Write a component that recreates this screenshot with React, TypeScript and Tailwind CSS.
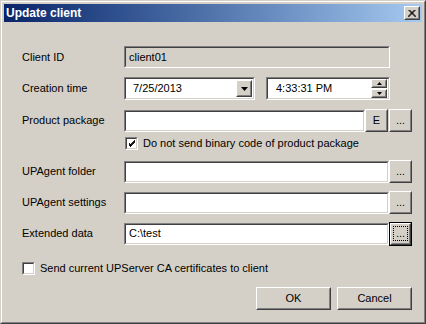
import React from 'react'

// Classic Windows 2000 "Update client" dialog

const font = "font-['Liberation_Sans',Arial,sans-serif]"

function Sunken({ className, disabled, children }: { className: string; disabled?: boolean; children?: React.ReactNode }) {
  return (
    <div className={`${className} border border-t-[#808080] border-l-[#808080] border-b-white border-r-white`}>
      <div
        className={`h-full border border-t-[#404040] border-l-[#404040] border-b-[#d4d0c8] border-r-[#d4d0c8] flex items-center ${disabled ? 'bg-[#d4d0c8]' : 'bg-white'}`}
      >
        {children}
      </div>
    </div>
  )
}

function Raised({ className, children, isDefault }: { className: string; children?: React.ReactNode; isDefault?: boolean }) {
  const body = (
    <div className="h-full border border-t-white border-l-white border-b-[#404040] border-r-[#404040]">
      <div className="h-full border border-t-[#d4d0c8] border-l-[#d4d0c8] border-b-[#808080] border-r-[#808080] bg-[#d4d0c8] flex items-center justify-center">
        {children}
      </div>
    </div>
  )
  if (isDefault) {
    return <div className={`${className} border border-black`}>{body}</div>
  }
  return <div className={className}>{body}</div>
}

function CheckBox({ checked }: { checked?: boolean }) {
  return (
    <Sunken className="w-[13px] h-[13px] shrink-0">
      {checked && (
        <svg width="9" height="9" viewBox="0 0 9 9" className="ml-[1px]">
          <path d="M1 4 L3 6 L8 1 M1 5 L3 7 L8 2 M1 6 L3 8 L8 3" stroke="black" strokeWidth="1" fill="none" shapeRendering="crispEdges" />
        </svg>
      )}
    </Sunken>
  )
}

function Label({ children }: { children: React.ReactNode }) {
  return <div className="w-[102px] shrink-0 text-[11px] text-black">{children}</div>
}

const DownArrow = () => (
  <svg width="7" height="4" viewBox="0 0 7 4">
    <path d="M0 0 H7 L3.5 4 Z" fill="black" />
  </svg>
)

export default function App() {
  return (
    <div className={`w-[426px] h-[324px] ${font} border border-t-[#d4d0c8] border-l-[#d4d0c8] border-b-[#404040] border-r-[#404040]`}>
      <div className="h-full border border-t-white border-l-white border-b-[#808080] border-r-[#808080] bg-[#d4d0c8] p-[2px] flex flex-col">
        {/* Title bar */}
        <div className="h-[18px] shrink-0 bg-linear-to-r from-[#0a246a] to-[#a6caf0] flex items-center justify-between pl-[2px] pr-[2px]">
          <span className="text-white font-bold text-[12px] leading-none">Update client</span>
          <Raised className="w-[16px] h-[14px]">
            <svg width="8" height="7" viewBox="0 0 8 7">
              <path d="M0.5 0 L7.5 7 M1.5 0 L8.5 7 M7.5 0 L0.5 7 M6.5 0 L-0.5 7" stroke="black" strokeWidth="1" />
            </svg>
          </Raised>
        </div>

        {/* Form */}
        <div className="flex flex-col pl-[18px] pr-[10px] text-[11px]">
          <div className="mt-[24px] h-[22px] flex items-center">
            <Label>Client ID</Label>
            <Sunken className="w-[266px] h-[22px]" disabled>
              <span className="pl-[3px] text-black">client01</span>
            </Sunken>
          </div>

          <div className="mt-[9px] h-[23px] flex items-center">
            <Label>Creation time</Label>
            <Sunken className="w-[131px] h-[23px]">
              <span className="pl-[7px] flex-1">7/25/2013</span>
              <Raised className="w-[16px] h-[17px] mr-[1px]">
                <DownArrow />
              </Raised>
            </Sunken>
            <Sunken className="w-[124px] h-[23px] ml-[11px]">
              <span className="pl-[8px] flex-1">4:33:31 PM</span>
              <div className="flex flex-col gap-[1px] mr-[1px]">
                <Raised className="w-[16px] h-[9px]">
                  <svg width="5" height="3" viewBox="0 0 5 3">
                    <path d="M0 3 H5 L2.5 0 Z" fill="black" />
                  </svg>
                </Raised>
                <Raised className="w-[16px] h-[9px]">
                  <svg width="5" height="3" viewBox="0 0 5 3">
                    <path d="M0 0 H5 L2.5 3 Z" fill="black" />
                  </svg>
                </Raised>
              </div>
            </Sunken>
          </div>

          <div className="mt-[9px] h-[23px] flex items-center">
            <Label>Product package</Label>
            <Sunken className="w-[241px] h-[22px]" />
            <Raised className="w-[23px] h-[23px]">E</Raised>
            <Raised className="w-[23px] h-[23px] ml-[1px]">
              <span className="leading-none pb-[1px]">...</span>
            </Raised>
          </div>

          <div className="mt-[5px] h-[13px] flex items-center pl-[103px]">
            <CheckBox checked />
            <span className="ml-[5px]">Do not send binary code of product package</span>
          </div>

          <div className="mt-[10px] h-[23px] flex items-center">
            <Label>UPAgent folder</Label>
            <Sunken className="w-[265px] h-[22px]" />
            <Raised className="w-[23px] h-[23px]">
              <span className="leading-none pb-[1px]">...</span>
            </Raised>
          </div>

          <div className="mt-[8px] h-[23px] flex items-center">
            <Label>UPAgent settings</Label>
            <Sunken className="w-[265px] h-[22px]" />
            <Raised className="w-[23px] h-[23px]">
              <span className="leading-none pb-[1px]">...</span>
            </Raised>
          </div>

          <div className="mt-[8px] h-[23px] flex items-center">
            <Label>Extended data</Label>
            <Sunken className="w-[265px] h-[22px]">
              <span className="pl-[3px]">C:\test</span>
            </Sunken>
            <Raised className="w-[23px] h-[24px]" isDefault>
              <div className="w-[15px] h-[15px] border border-dotted border-black flex items-center justify-center">
                <span className="leading-none pb-[1px]">...</span>
              </div>
            </Raised>
          </div>

          <div className="mt-[17px] h-[13px] flex items-center">
            <CheckBox />
            <span className="ml-[5px]">Send current UPServer CA certificates to client</span>
          </div>

          <div className="mt-[12px] h-[23px] flex justify-end gap-[6px]">
            <Raised className="w-[75px] h-[23px]">OK</Raised>
            <Raised className="w-[75px] h-[23px]">Cancel</Raised>
          </div>
        </div>
      </div>
    </div>
  )
}
